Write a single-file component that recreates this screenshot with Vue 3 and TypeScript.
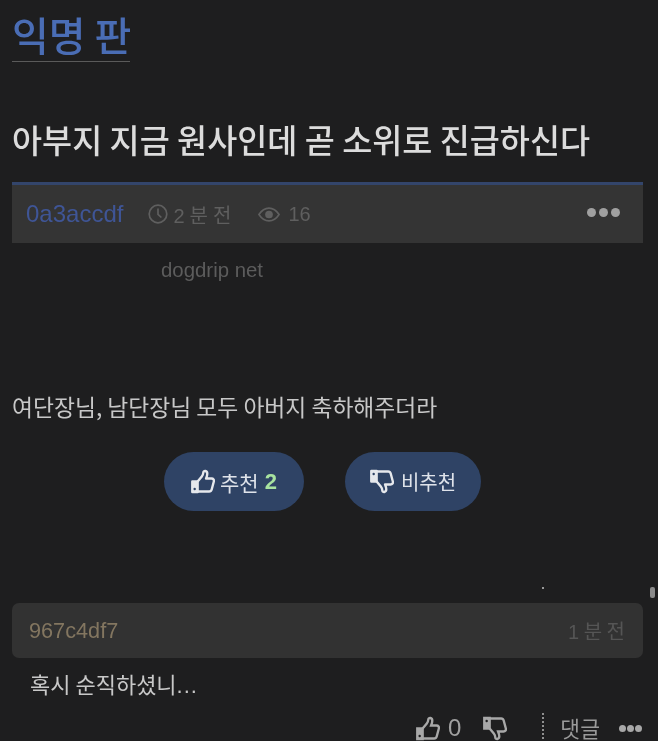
<script setup lang="ts">
const hand = "M5.500 10.500 9 6.200c.8-1 1.200-2.100 1.300-3.500.1-1.600 3.300-1.500 3.300 1.200 0 1.500-.5 2.800-1 4.100h4.600c1.500 0 2.300 1.300 1.900 2.500l-1.800 6.700c-.3 1.100-1.100 1.700-2.200 1.700H5.500";
const cuff = "M1 10.500h4.500v8.800H1z";
</script>

<template>
  <div class="page">
    <header class="board"><h1 class="board-name">익명 판</h1></header>
    <h2 class="title">아부지 지금 원사인데 곧 소위로 진급하신다</h2>
    <div class="meta">
      <span class="author">0a3accdf</span>
      <span class="info time">
        <svg class="ico" viewBox="0 0 20 20"><circle cx="10" cy="10" r="8.800" /><path d="M10 4.500V10.300l3.400 3.200" /></svg>
        <span class="wide">2 분 전</span>
      </span>
      <span class="info views">
        <svg class="eye" viewBox="0 0 24 16"><path d="M1 8c3-4.600 6.800-7 11-7s8 2.400 11 7c-3 4.600-6.800 7-11 7S4 12.600 1 8z" /><circle class="fill" cx="12" cy="8" r="4.200" /></svg>
        <span>16</span>
      </span>
      <span class="dots meta-dots"><i></i><i></i><i></i></span>
    </div>
    <p class="source">dogdrip net</p>
    <p class="body">여단장님, 남단장님 모두 아버지 축하해주더라</p>
    <div class="votes">
      <button class="vote up">
        <svg class="thumb" viewBox="0 0 20 21"><path class="cuff" :d="cuff" /><circle class="hole" cx="3" cy="16.800" r="1" /><path :d="hand" /></svg>
        <span>추천</span><b class="count">2</b>
      </button>
      <button class="vote down">
        <svg class="thumb flip" viewBox="0 0 20 21"><path class="cuff" :d="cuff" /><circle class="hole" cx="3" cy="16.800" r="1" /><path :d="hand" /></svg>
        <span>비추천</span>
      </button>
    </div>
    <div class="speck-row"><i class="speck"></i><i class="scroll"></i></div>
    <div class="c-head">
      <span class="c-author">967c4df7</span>
      <span class="c-time">1 분 전</span>
    </div>
    <p class="c-body">혹시 순직하셨니<span class="ell">...</span></p>
    <div class="c-actions">
      <svg class="c-thumb" viewBox="0 0 20 21"><path class="cuff" :d="cuff" /><circle class="hole" cx="3" cy="16.800" r="1" /><path :d="hand" /></svg>
      <span class="c-count">0</span>
      <svg class="c-thumb c-down flip" viewBox="0 0 20 21"><path class="cuff" :d="cuff" /><circle class="hole" cx="3" cy="16.800" r="1" /><path :d="hand" /></svg>
      <span class="sep"></span>
      <span class="reply">댓글</span>
      <span class="dots c-dots"><i></i><i></i><i></i></span>
    </div>
  </div>
</template>

<style>
html, body { margin: 0; background: #1e1e1f; }
</style>

<style scoped>
.page {
  width: 658px;
  height: 741px;
  overflow: hidden;
  box-sizing: border-box;
  padding: 0 15px 0 12px;
  background: #1e1e1f;
  font-family: "Noto Sans CJK KR", "Liberation Sans", sans-serif;
  filter: blur(0.5px);
}
.board { width: 118px; height: 62px; box-sizing: border-box; border-bottom: 1px solid #5a5a5a; }
.board-name { margin: 0; padding-top: 11px; font-size: 40px; line-height: 46px; font-weight: 500; color: #4a6db5; white-space: nowrap; }
.title { margin: 53px 0 0; font-size: 32.700px; line-height: 48px; font-weight: 500; color: #dcdcdc; white-space: nowrap; }
.meta {
  margin-top: 19px; height: 61px; box-sizing: border-box;
  border-top: 3px solid #33456b; background: #343434;
  display: flex; align-items: center; padding: 0 23px 0 14px;
  font-family: "Liberation Sans", "Noto Sans CJK KR", sans-serif;
  font-size: 20px; color: #5f5f5f;
}
.author { color: #3f5596; font-size: 24px; margin-right: 25px; }
.info { display: flex; align-items: center; gap: 5px; }
.time { margin-right: 27px; }
.wide { word-spacing: -0.500px; }
.ico { width: 20px; height: 20px; fill: none; stroke: #5f5f5f; stroke-width: 1.700; }
.eye { width: 22px; height: 15px; fill: none; stroke: #5f5f5f; stroke-width: 1.800; }
.eye .fill { fill: #5f5f5f; stroke: none; }
.views { gap: 8px; }
.dots { display: flex; gap: 3px; margin-left: auto; }
.dots i { width: 9px; height: 9px; border-radius: 50%; background: #a0a0a0; }
.meta-dots { margin-top: -4px; }
.source { margin: 15px 0 0 149px; font-family: "Liberation Sans", sans-serif; font-size: 20.400px; line-height: 24px; color: #5c5c5c; }
.body { margin: 110px 0 0; font-size: 22.800px; line-height: 30px; color: #c8c8c8; white-space: nowrap; }
.votes { display: flex; gap: 41px; margin: 30px 0 0 152px; }
.vote {
  height: 59px; border: 0; border-radius: 30px; background: #2f4365; color: #dfe3ea;
  display: flex; align-items: center; justify-content: center; gap: 5px;
  font-family: inherit; font-size: 21px; padding: 0;
}
.up { width: 140px; }
.down { width: 136px; font-size: 20px; gap: 7px; }
.thumb { width: 24px; height: 25px; fill: none; stroke: #e6e8ec; stroke-width: 2; stroke-linejoin: round; color: #e6e8ec; flex: none; }
.cuff { fill: currentColor; }
.hole { fill: #2f4365; stroke: none; }
.flip { transform: rotate(180deg) scaleX(-1); }
.count { color: #a8e3a0; font-family: "Liberation Sans", sans-serif; font-size: 22px; margin-left: 1px; }
.speck-row { height: 92px; position: relative; }
.speck { position: absolute; left: 530px; top: 76px; width: 2px; height: 2px; background: #999; }
.scroll { position: absolute; left: 638px; top: 76px; width: 5px; height: 11px; border-radius: 2px; background: #8a8a8a; }
.c-head {
  height: 55px; border-radius: 7px; background: #323232;
  display: flex; align-items: center; justify-content: space-between; padding: 0 18px 0 17px;
  font-family: "Liberation Sans", "Noto Sans CJK KR", sans-serif;
}
.c-author { color: #837660; font-size: 21.700px; }
.c-time { color: #555; font-size: 20px; word-spacing: -1px; }
.c-body { margin: 9px 0 0 18px; font-size: 22px; line-height: 32px; color: #c8c8c8; white-space: nowrap; }
.ell { font-family: "Liberation Sans", sans-serif; letter-spacing: 1px; }
.c-actions {
  display: flex; align-items: center; height: 30px; margin-top: 11px; color: #9a9a9a;
  padding-left: 404px; font-size: 24px;
}
.c-thumb { width: 24px; height: 25px; fill: none; stroke: #a8a8a8; stroke-width: 2; color: #a8a8a8; flex: none; }
.c-thumb .hole { fill: #1e1e1f; }
.c-count { margin-left: 8px; font-family: "Liberation Sans", sans-serif; color: #a0a0a0; }
.c-down { margin-left: 22px; }
.sep { height: 30px; margin-left: 35px; border-left: 2px dotted #8f8f8f; }
.reply { margin-left: 16px; font-size: 21.500px; line-height: 24px; white-space: nowrap; }
.c-dots { margin-left: 19px; gap: 1px; }
.c-dots i { width: 7px; height: 7px; background: #a8a8a8; }
</style>
